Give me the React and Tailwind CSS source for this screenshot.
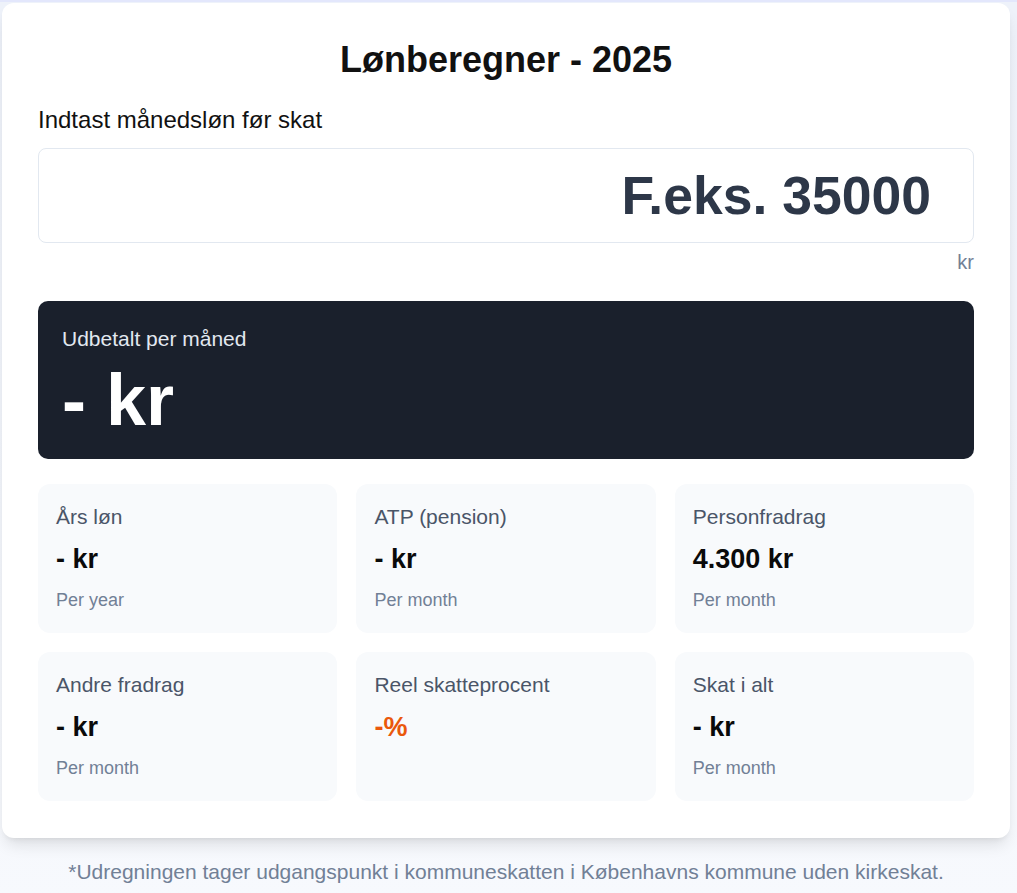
import React from "react";

const items = [
  { label: "Års løn", value: "- kr", sub: "Per year" },
  { label: "ATP (pension)", value: "- kr", sub: "Per month" },
  { label: "Personfradrag", value: "4.300 kr", sub: "Per month" },
  { label: "Andre fradrag", value: "- kr", sub: "Per month" },
  { label: "Reel skatteprocent", value: "-%", sub: null, accent: true },
  { label: "Skat i alt", value: "- kr", sub: "Per month" },
];

export default function App() {
  return (
    <div
      className="min-h-[893px] border-t-[2px] border-[#e3e7fc] bg-gradient-to-b from-[#eef2fa] to-[#f7f9fd] pb-4"
      style={{ fontFamily: '"Liberation Sans", Arial, sans-serif' }}
    >
      <div className="ml-[2px] mt-[1px] w-[1008px] rounded-xl bg-white px-9 pb-[37px] pt-[37px] shadow-lg">
        <h1 className="text-center text-[36px] font-bold leading-[40px] text-[#111111]">
          Lønberegner - 2025
        </h1>
        <div className="mt-6 text-[24px] leading-[32px] text-[#111111]">
          Indtast månedsløn før skat
        </div>
        <input
          type="text"
          placeholder="F.eks. 35000"
          className="mt-3 block h-[95px] w-full rounded-lg border border-[#e2e8f0] bg-white pl-[43px] pr-[42px] text-right text-[53.5px] font-bold text-[#2d3748] outline-none placeholder:text-[#2d3748]"
        />
        <div className="mt-[7px] text-right text-[20px] leading-[24px] text-[#718096]">kr</div>

        <div className="mt-[27px] rounded-[10px] bg-[#1a202c] px-6 pb-[23px] pt-6">
          <div className="text-[21px] leading-[28px] text-[#e2e8f0]">Udbetalt per måned</div>
          <div className="mt-[11px] text-[72px] font-bold leading-[72px] text-white">- kr</div>
        </div>

        <div className="mt-[25px] grid grid-cols-3 gap-[1.2rem]">
          {items.map((it) => (
            <div key={it.label} className="rounded-xl bg-[#f8fafc] px-[18px] pb-[20px] pt-[19px]">
              <div className="text-[21px] leading-[28px] text-[#4a5568]">{it.label}</div>
              <div
                className={
                  "mt-[10px] text-[27px] font-bold leading-[36px] " +
                  (it.accent ? "text-[#ea580c]" : "text-[#0a0a0a]")
                }
              >
                {it.value}
              </div>
              {it.sub && (
                <div className="mt-[10px] text-[18px] leading-[26px] text-[#718096]">{it.sub}</div>
              )}
            </div>
          ))}
        </div>
      </div>
      <p className="mt-5 w-[1012px] text-center text-[21px] leading-[28px] text-[#718096]">
        *Udregningen tager udgangspunkt i kommuneskatten i Københavns kommune uden kirkeskat.
      </p>
    </div>
  );
}
